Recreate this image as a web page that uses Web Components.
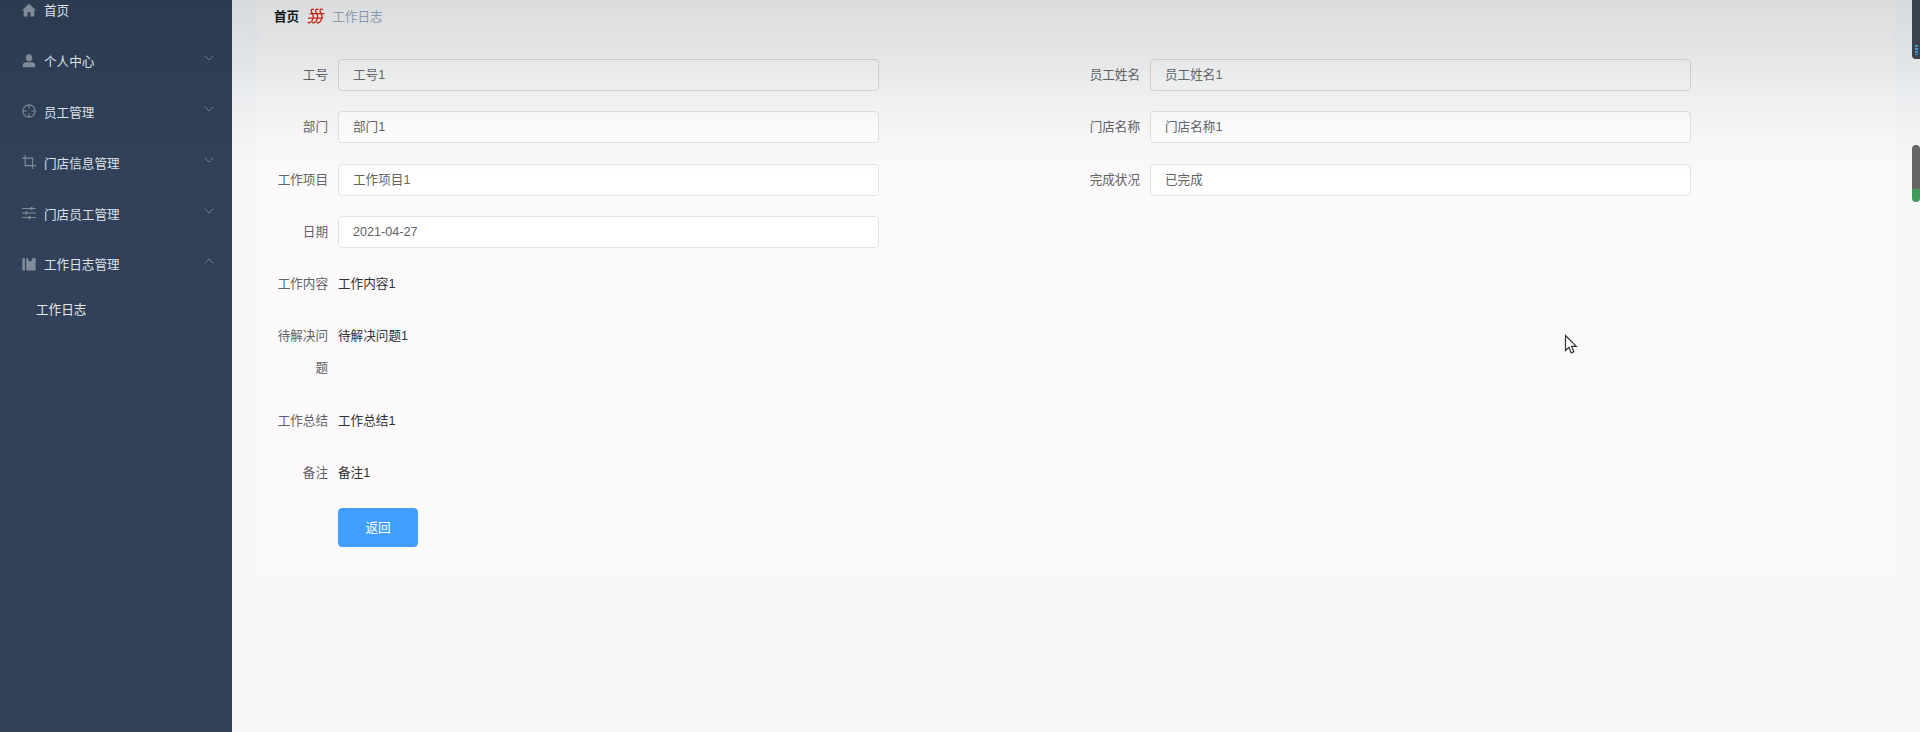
<!DOCTYPE html>
<html lang="zh">
<head>
<meta charset="utf-8">
<title>工作日志</title>
<style>
  html, body { margin: 0; height: 732px; overflow: hidden; background: #f6f7f9; }
  body { font-family: "Liberation Sans", "Noto Sans CJK SC", sans-serif; font-size: 12.6px; }
</style>
</head>
<body>
<app-shell>
  <side-menu slot="side">
    <menu-item icon="home" label="首页" plain></menu-item>
    <menu-item icon="user" label="个人中心"></menu-item>
    <menu-item icon="target" label="员工管理"></menu-item>
    <menu-item icon="crop" label="门店信息管理"></menu-item>
    <menu-item icon="sliders" label="门店员工管理"></menu-item>
    <menu-item icon="chart" label="工作日志管理" open></menu-item>
    <sub-item>工作日志</sub-item>
  </side-menu>
  <crumb-bar current="工作日志">首页</crumb-bar>
  <detail-form>
    <form-field label="工号" disabled>工号1</form-field>
    <form-field label="员工姓名" disabled>员工姓名1</form-field>
    <form-field label="部门">部门1</form-field>
    <form-field label="门店名称">门店名称1</form-field>
    <form-field label="工作项目">工作项目1</form-field>
    <form-field label="完成状况">已完成</form-field>
    <form-field label="日期">2021-04-27</form-field>
    <form-field label="工作内容" wide text>工作内容1</form-field>
    <form-field label="待解决问题" wide text>待解决问题1</form-field>
    <form-field label="工作总结" wide text>工作总结1</form-field>
    <form-field label="备注" wide text>备注1</form-field>
    <back-button>返回</back-button>
  </detail-form>
</app-shell>

<script>
const ICONS = {
  home: '<path fill="currentColor" d="M8 .8 0 8.2h2V15.4h4.4v-4.8h3.2v4.8H14V8.2h2z"/>',
  user: '<ellipse fill="currentColor" cx="8" cy="4.2" rx="3.7" ry="4"/><path fill="currentColor" d="M1 15.2v-2.6C1 10.4 3 9.4 5 9.4h6c2 0 4 1 4 3.2v2.6z"/>',
  target: '<g fill="none" stroke="currentColor" stroke-width="1.25"><circle cx="8" cy="8" r="7"/><path d="M8 1v4.4M8 10.6V15M1 8h4.4M10.6 8H15"/></g>',
  crop: '<path fill="none" stroke="currentColor" stroke-width="1.3" d="M3.6 0v12.2H16M0 3.6h12.2V16"/>',
  sliders: '<path fill="none" stroke="currentColor" stroke-width="1.3" d="M0 2.8h16M0 8h16M0 13.2h16"/><path fill="none" stroke="currentColor" stroke-width="2.2" d="M11 1v3.6M5 6.2v3.6M8.5 11.4V15"/>',
  chart: '<path fill="currentColor" d="M.4 1.5h3V15.5h-3zM4.8 1.5h2.2v2l2.2 2 2.2-2v-2h4.2v14H4.8z"/>'
};

class AppShell extends HTMLElement {
  constructor() {
    super();
    this.attachShadow({ mode: 'open' });
    this.shadowRoot.innerHTML = `
    <style>
      :host { display: flex; height: 732px; position: relative; overflow: hidden; }
      .side { flex: 0 0 232px; }
      .main { flex: 1; min-width: 0; padding: 0 24px; background: #f6f7f9; }
      /* washed band at the top of the content, lies over everything */
      .fade {
        position: absolute; left: 232px; right: 0; top: 0; height: 175px; pointer-events: none;
        background: linear-gradient(rgba(45,65,70,.155), rgba(45,65,70,.1) 34%, rgba(45,65,70,.05) 58%, rgba(45,65,70,.015) 82%, rgba(45,65,70,0));
      }
      .bar { position: absolute; right: 0; width: 8px; border-radius: 4px 0 0 4px; }
      .bar-a { top: -4px; height: 63px; background: #3a424c; }
      .bar-a i { position: absolute; left: 3px; bottom: 4px; width: 3px; height: 10px; background: repeating-linear-gradient(#3f97cf 0 2px, #3a424c 2px 3px); }
      .bar-b { top: 145px; height: 57px; border-radius: 4px; background: linear-gradient(#666 0 78%, #3f9a5c 78%); }
      .cursor { position: absolute; left: 1564px; top: 334px; width: 14px; height: 22px; }
    </style>
    <div class="side"><slot name="side"></slot></div>
    <div class="main"><slot></slot></div>
    <div class="fade"></div>
    <div class="bar bar-a"><i></i></div>
    <div class="bar bar-b"></div>
    <svg class="cursor" viewBox="0 0 14 22"><path fill="#fff" stroke="#333" stroke-width="1.2" d="M1.5 1.5v15l3.4-3.2 2.4 5.6 2.6-1.1-2.4-5.4h4.8z"/></svg>
    `;
  }
}

class SideMenu extends HTMLElement {
  constructor() {
    super();
    this.attachShadow({ mode: 'open' });
    this.shadowRoot.innerHTML = `
    <style>
      :host { display: block; height: 732px; overflow: hidden; background: linear-gradient(#2c3b50, #304159 25%, #304159); }
      .list { margin-top: -15.5px; }
    </style>
    <div class="list"><slot></slot></div>
    `;
  }
}

class MenuItem extends HTMLElement {
  constructor() {
    super();
    this.attachShadow({ mode: 'open' });
    const icon = ICONS[this.getAttribute('icon')];
    const arrow = this.hasAttribute('plain') ? '' :
      `<svg class="arrow" viewBox="0 0 10 6"><path fill="none" stroke="currentColor" stroke-width="1" d="${this.hasAttribute('open') ? 'M.7 5.3 5 1l4.3 4.3' : 'M.7.7 5 5 9.3.7'}"/></svg>`;
    this.shadowRoot.innerHTML = `
    <style>
      :host { display: flex; align-items: center; height: 50.8px; padding-left: 22px; color: #dde2e8; font-size: 12.6px; }
      .icon { width: 14px; height: 14px; margin-right: 8px; color: #808b99; flex: none; }
      .arrow { width: 10px; height: 6px; margin-left: auto; margin-right: 18px; margin-top: -5px; color: #6f7c8d; flex: none; }
    </style>
    <svg class="icon" viewBox="0 0 16 16">${icon}</svg>
    <span>${this.getAttribute('label')}</span>
    ${arrow}
    `;
  }
}

class SubItem extends HTMLElement {
  constructor() {
    super();
    this.attachShadow({ mode: 'open' });
    this.shadowRoot.innerHTML = `
    <style>
      :host { display: flex; align-items: center; height: 38px; padding-left: 36px; color: #e4e8ed; font-size: 12.6px; }
    </style>
    <slot></slot>
    `;
  }
}

class CrumbBar extends HTMLElement {
  constructor() {
    super();
    this.attachShadow({ mode: 'open' });
    this.shadowRoot.innerHTML = `
    <style>
      :host {
        display: flex; align-items: center; box-sizing: border-box; height: 39px; padding: 0 18px 8px;
        background: #fbf9fa; border-radius: 0 0 8px 8px; font-size: 12.6px;
        box-shadow: 0 1px 3px rgba(0,0,0,.03);
      }
      .home { color: #111; font-weight: 700; }
      .sep { width: 18px; height: 16px; margin: 0 7px 0 8px; }
      .now { color: #97a8be; }
    </style>
    <span class="home"><slot></slot></span>
    <svg class="sep" viewBox="0 0 18 16"><g fill="none" stroke="#d8200f" stroke-width="1.3">
      <path d="M7 1.6C5.6.6 4.4 1.2 4.2 2.6 4 4.4 6.6 6 6.2 9 6 11 5 14 2.4 14.8 1.4 15.2 1 14.4 1.4 13.8"/>
      <path d="M11.4 1.6C10 .6 8.8 1.2 8.6 2.6c-.2 1.8 2.4 3.4 2 6.4-.2 2-1.2 5-3.8 5.8-1 .4-1.4-.4-1-1"/>
      <path d="M15.8 1.6C14.4.6 13.2 1.2 13 2.6c-.2 1.8 2.4 3.4 2 6.4-.2 2-1.2 5-3.8 5.8-1 .4-1.4-.4-1-1"/>
      <path d="M2.6 5.6H17.4M1 10.2H16"/>
    </g></svg>
    <span class="now">${this.getAttribute('current')}</span>
    `;
  }
}

class DetailForm extends HTMLElement {
  constructor() {
    super();
    this.attachShadow({ mode: 'open' });
    this.shadowRoot.innerHTML = `
    <style>
      :host { display: block; background: #fbf9fa; border-radius: 0 0 8px 8px; padding: 20px 12px 29px; height: 538px; box-sizing: border-box; }
      .grid { display: grid; grid-template-columns: 812px 812px; row-gap: 20.3px; }
    </style>
    <div class="grid"><slot></slot></div>
    `;
  }
}

class FormField extends HTMLElement {
  constructor() {
    super();
    this.attachShadow({ mode: 'open' });
    this.shadowRoot.innerHTML = `
    <style>
      :host { display: flex; align-items: flex-start; }
      :host([wide]) { grid-column: 1 / -1; }
      .label { flex: none; width: 60px; padding-right: 10px; text-align: right; color: #606266; line-height: 32px; font-size: 12.6px; }
      .value {
        box-sizing: border-box; width: 541px; height: 32px; line-height: 30px; padding: 0 14px;
        border: 1px solid #e0e2e7; border-radius: 4px; background: #fff; color: #606266; font-size: 12.6px;
      }
      :host([disabled]) .value { background: #fbfbfb; border-color: #d8dade; color: #66686c; }
      :host([text]) .value { border: 0; background: none; padding: 0; height: auto; line-height: 32px; color: #303133; }
    </style>
    <div class="label">${this.getAttribute('label')}</div>
    <div class="value"><slot></slot></div>
    `;
  }
}

class BackButton extends HTMLElement {
  constructor() {
    super();
    this.attachShadow({ mode: 'open' });
    this.shadowRoot.innerHTML = `
    <style>
      :host { display: block; grid-column: 1 / -1; padding-left: 70px; margin-top: -1px; }
      button {
        display: block; width: 80px; height: 39px; padding: 0 0 3px; border: 1px solid #409eff; border-radius: 4px;
        background: #409eff; color: #fff; font: 12.6px "Liberation Sans", "Noto Sans CJK SC", sans-serif;
      }
    </style>
    <button type="button"><slot></slot></button>
    `;
  }
}

customElements.define('app-shell', AppShell);
customElements.define('side-menu', SideMenu);
customElements.define('menu-item', MenuItem);
customElements.define('sub-item', SubItem);
customElements.define('crumb-bar', CrumbBar);
customElements.define('detail-form', DetailForm);
customElements.define('form-field', FormField);
customElements.define('back-button', BackButton);
</script>
</body>
</html>
